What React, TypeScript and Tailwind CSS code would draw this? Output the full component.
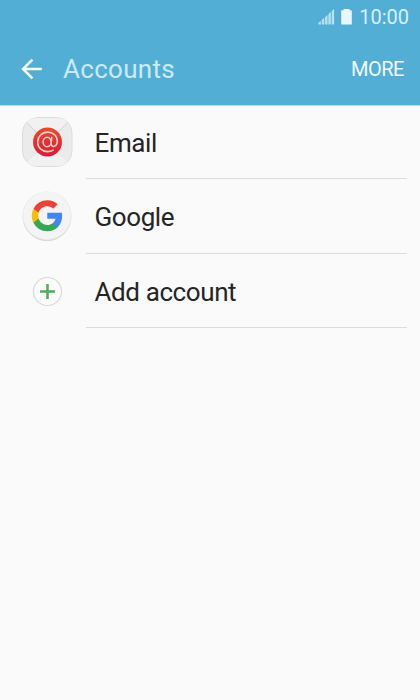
import type { ReactNode } from "react";

interface Account {
  label: string;
  icon: ReactNode;
}

const SignalIcon = () => (
  <svg width="17" height="16" viewBox="0 0 17 16" fill="#b9e2f2">
    <path d="M.5 15.5v-2l2.400-1.200v3.200zM3.800 15.500v-4.500l2.400-2.200v6.700zM7.100 15.500V8.300l2.400-2.400v9.600zM10.400 15.500V5.200l2.400-2.400v12.700zM13.700 15.500V2l2.400-2v15.500z" />
  </svg>
);

const BatteryIcon = () => (
  <svg width="11" height="16" viewBox="0 0 11 16" fill="#e9f7fc">
    <path d="M2.500 0h6v1.300h1.700a.6.6 0 0 1 .6.6v13a.6.6 0 0 1-.6.6H.8a.6.6 0 0 1-.6-.6v-13a.6.6 0 0 1 .6-.6h1.700z" />
  </svg>
);

const BackIcon = () => (
  <svg width="22" height="22" viewBox="0 0 22 22" fill="none" stroke="#f4fcff" strokeWidth="2.5">
    <path d="M20.8 11H2.5M11.4 1.600 2 11l9.400 9.400" />
  </svg>
);

const EmailIcon = () => (
  <svg width="52" height="52" viewBox="0 0 52 52" fill="none">
    <defs>
      <linearGradient id="at" x1="0" y1="0" x2="0" y2="1">
        <stop offset="0" stopColor="#e94a2f" />
        <stop offset="1" stopColor="#d81c38" />
      </linearGradient>
    </defs>
    <rect x="1.5" y="1.5" width="49.5" height="49" rx="15.5" fill="#ebebeb" stroke="#dcdcdc" />
    <path d="M5.5 6C9 2.600 14 2 17 2h18c3 0 8 .6 11.500 4L31 24H21z" fill="#f1f1f1" />
    <path d="M5.500 46 22 31h8l16.500 15c-3.500 3.400-8.500 4-11.500 4H17c-3 0-8-.6-11.500-4z" fill="#f1f1f1" />
    <path d="M6 6.500 22 24M46.500 6.500 30 24" stroke="#d4d4d4" />
    <path d="M6 45.500 21 31M46.500 45.500 31 31" stroke="#e9e9e9" />
    <circle cx="26.5" cy="26" r="14.5" fill="url(#at)" />
    <g
      transform="translate(26.5 25.8)"
      stroke="#fbd0c8"
      strokeWidth="1.600"
      strokeLinecap="round"
    >
      <ellipse cx="-.4" cy=".2" rx="4" ry="4.700" />
      <path d="M4.200-4.500 3.600 2c-.2 4 6.200 3.300 6.200-2.500C9.800-6 5.400-9.700.3-9.700-5.400-9.700-9.800-5.400-9.800.2-9.800 5.900-5.700 9.800 0 9.800c2.300 0 4.100-.5 5.700-1.500" />
    </g>
  </svg>
);

const GoogleIcon = () => (
  <svg width="52" height="52" viewBox="0 0 52 52">
    <circle cx="26" cy="26.6" r="24.4" fill="#d5d5d5" />
    <circle cx="26" cy="25.8" r="24.4" fill="#e7e7e7" />
    <circle cx="26" cy="25.6" r="23.8" fill="#f4f4f4" />
    <g transform="translate(10.8 10.2) scale(1.29)">
      <path fill="#4285f4" d="M23.500 12.270c0-.85-.08-1.670-.22-2.450H12v4.640h6.450a5.520 5.520 0 0 1-2.390 3.620v3.010h3.870c2.260-2.090 3.570-5.160 3.570-8.820z" />
      <path fill="#34a853" d="M12 24c3.240 0 5.950-1.080 7.930-2.910l-3.870-3.010c-1.070.72-2.450 1.150-4.060 1.150-3.120 0-5.770-2.110-6.710-4.950H1.290v3.110A12 12 0 0 0 12 24z" />
      <path fill="#fbbc05" d="M5.290 14.280A7.200 7.200 0 0 1 4.910 12c0-.79.140-1.560.380-2.280V6.610H1.290a12 12 0 0 0 0 10.780z" />
      <path fill="#ea4335" d="M12 4.770c1.760 0 3.350.610 4.590 1.800l3.440-3.440A11.500 11.500 0 0 0 12 0 12 12 0 0 0 1.290 6.610l4 3.110C6.230 6.880 8.880 4.770 12 4.770z" />
    </g>
  </svg>
);

const AddIcon = () => (
  <svg width="52" height="52" viewBox="0 0 52 52" fill="none">
    <circle cx="26.5" cy="26.500" r="14" fill="#fcfcfc" stroke="#d9d9d9" strokeWidth="1.2" />
    <path d="M26.5 19v15M19 26.500h15" stroke="#4caf58" strokeWidth="2.5" />
  </svg>
);

const accounts: Account[] = [
  { label: "Email", icon: <EmailIcon /> },
  { label: "Google", icon: <GoogleIcon /> },
  { label: "Add account", icon: <AddIcon /> },
];

const App = () => {
  return (
    <div className="min-h-screen bg-[#fafafa] font-[Roboto,sans-serif] text-[#252525]">
      <header className="h-[106px] border-b border-[#b5dced] bg-[#53aed6]">
        {/* Status bar */}
        <div className="flex h-[33px] items-center justify-end pr-[11px]">
          <SignalIcon />
          <div className="mr-[7px] ml-[6px]">
            <BatteryIcon />
          </div>
          <span className="text-[20px] leading-none text-[#d6f0fa]">10:00</span>
        </div>

        {/* Title bar */}
        <div className="flex h-[71px] items-center pr-4 pl-[21px]">
          <button aria-label="Back">
            <BackIcon />
          </button>
          <h1 className="ml-5 flex-1 pt-px text-[26px] leading-[26px] tracking-[0.3px] text-[#c9eaf7]">
            Accounts
          </h1>
          <button className="text-[20px] leading-none tracking-[-0.5px] text-[#f0faff]">MORE</button>
        </div>
      </header>

      <main className="-mt-[1.5px]">
        {accounts.map(({ label, icon }) => (
          <div key={label} className="flex h-[74.5px] pr-[13px] pl-[21px]">
            <div className="w-[65px] shrink-0 pt-[11px]">{icon}</div>
            <div className="flex flex-1 items-center border-b border-[#dcdcdc] pt-[3px] pl-[8.5px] text-[26px] leading-[26px] tracking-[-0.4px]">
              {label}
            </div>
          </div>
        ))}
      </main>
    </div>
  );
};

export default App;
